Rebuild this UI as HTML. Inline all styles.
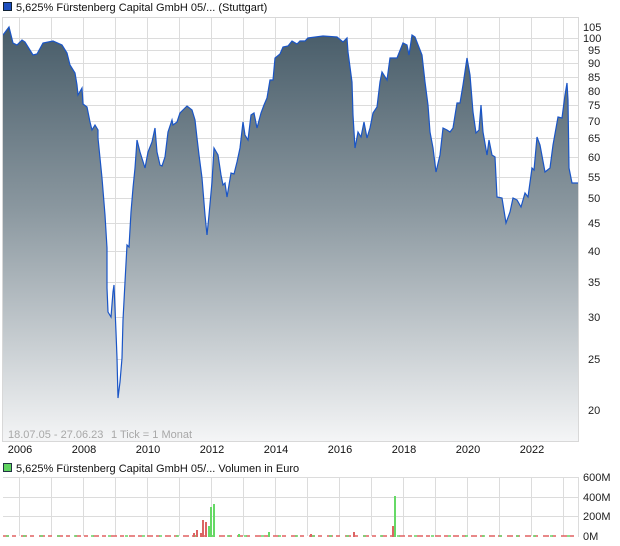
<!DOCTYPE html>
<html><head><meta charset="utf-8"><style>
html,body{margin:0;padding:0;background:#fff;}
svg{display:block;font-family:"Liberation Sans",sans-serif;}
</style></head><body>
<svg width="620" height="546" viewBox="0 0 620 546" xmlns="http://www.w3.org/2000/svg">
<defs>
<linearGradient id="g" x1="0" y1="17" x2="0" y2="441" gradientUnits="userSpaceOnUse">
<stop offset="0" stop-color="#435865"/>
<stop offset="0.45" stop-color="#8a979f"/>
<stop offset="1" stop-color="#f4f5f6"/>
</linearGradient>
</defs>
<rect x="3.5" y="2.5" width="8" height="8" fill="#1d4fbf" stroke="#123" stroke-width="1"/>
<text x="16" y="11" font-size="11" fill="#111">5,625% Fürstenberg Capital GmbH 05/... (Stuttgart)</text>
<g stroke="#dcdcdc" stroke-width="1">
<line x1="3" y1="17.5" x2="578" y2="17.5"/>
<line x1="3" y1="38.5" x2="578" y2="38.5"/>
<line x1="3" y1="50.5" x2="578" y2="50.5"/>
<line x1="3" y1="63.5" x2="578" y2="63.5"/>
<line x1="3" y1="77.5" x2="578" y2="77.5"/>
<line x1="3" y1="91.5" x2="578" y2="91.5"/>
<line x1="3" y1="105.5" x2="578" y2="105.5"/>
<line x1="3" y1="121.5" x2="578" y2="121.5"/>
<line x1="3" y1="138.5" x2="578" y2="138.5"/>
<line x1="3" y1="157.5" x2="578" y2="157.5"/>
<line x1="3" y1="177.5" x2="578" y2="177.5"/>
<line x1="3" y1="198.5" x2="578" y2="198.5"/>
<line x1="3" y1="223.5" x2="578" y2="223.5"/>
<line x1="3" y1="251.5" x2="578" y2="251.5"/>
<line x1="3" y1="282.5" x2="578" y2="282.5"/>
<line x1="3" y1="317.5" x2="578" y2="317.5"/>
<line x1="3" y1="359.5" x2="578" y2="359.5"/>
<line x1="3" y1="410.5" x2="578" y2="410.5"/>
<line x1="19.5" y1="17" x2="19.5" y2="441"/><line x1="51.5" y1="17" x2="51.5" y2="441"/><line x1="83.5" y1="17" x2="83.5" y2="441"/><line x1="115.5" y1="17" x2="115.5" y2="441"/><line x1="147.5" y1="17" x2="147.5" y2="441"/><line x1="179.5" y1="17" x2="179.5" y2="441"/><line x1="211.5" y1="17" x2="211.5" y2="441"/><line x1="243.5" y1="17" x2="243.5" y2="441"/><line x1="275.5" y1="17" x2="275.5" y2="441"/><line x1="307.5" y1="17" x2="307.5" y2="441"/><line x1="339.5" y1="17" x2="339.5" y2="441"/><line x1="371.5" y1="17" x2="371.5" y2="441"/><line x1="403.5" y1="17" x2="403.5" y2="441"/><line x1="435.5" y1="17" x2="435.5" y2="441"/><line x1="467.5" y1="17" x2="467.5" y2="441"/><line x1="499.5" y1="17" x2="499.5" y2="441"/><line x1="531.5" y1="17" x2="531.5" y2="441"/><line x1="563.5" y1="17" x2="563.5" y2="441"/>
</g>
<path fill="url(#g)" d="M3,35 L9,27 L13,43 L17,45 L22,40 L25,42 L33,55 L37,54 L43,43 L53,41 L62,45 L67,53 L70,65 L75,73 L77,85 L78,95 L82,88 L83,104 L87,107 L90,122 L92,130 L95,125 L98,130 L98,138 L100,158 L102,178 L105,215 L107,248 L107,288 L108,312 L111,317 L113,292 L114,285 L115,308 L116,332 L117,358 L118,398 L120,382 L122,358 L123,320 L125,282 L127,245 L129,247 L131,212 L133,188 L135,168 L137,140 L140,152 L145,168 L148,152 L152,142 L155,128 L157,152 L160,165 L162,166 L165,157 L168,132 L172,120 L173,125 L177,122 L180,113 L187,106 L192,110 L195,120 L197,138 L199,155 L202,178 L205,215 L207,235 L209,215 L212,182 L214,148 L218,155 L221,175 L223,185 L225,183 L227,197 L231,173 L234,174 L237,162 L240,148 L243,122 L245,135 L248,140 L251,115 L254,113 L257,128 L261,113 L264,105 L267,98 L270,80 L273,80 L275,58 L280,54 L283,47 L288,46 L292,41 L297,44 L300,41 L305,41 L308,38 L323,36 L337,37 L343,42 L347,38 L348,52 L352,82 L353,115 L355,148 L358,132 L361,137 L364,122 L367,138 L370,128 L373,113 L377,107 L380,82 L382,72 L387,80 L390,58 L397,58 L403,43 L407,45 L409,55 L412,35 L415,37 L422,55 L425,82 L428,105 L430,132 L433,148 L436,172 L440,155 L443,128 L447,130 L450,132 L453,128 L457,103 L460,103 L463,85 L467,58 L470,75 L473,112 L476,133 L479,130 L481,105 L483,132 L487,155 L489,140 L492,155 L495,157 L497,197 L502,198 L506,223 L510,212 L513,198 L517,200 L521,207 L525,193 L528,197 L532,168 L534,170 L537,137 L540,145 L545,172 L550,168 L553,145 L558,117 L562,118 L565,95 L567,83 L568,100 L569,168 L572,183 L578,183 L578,441 L3,441 Z"/>
<path fill="none" stroke="#1a55c6" stroke-width="1.2" d="M3,35 L9,27 L13,43 L17,45 L22,40 L25,42 L33,55 L37,54 L43,43 L53,41 L62,45 L67,53 L70,65 L75,73 L77,85 L78,95 L82,88 L83,104 L87,107 L90,122 L92,130 L95,125 L98,130 L98,138 L100,158 L102,178 L105,215 L107,248 L107,288 L108,312 L111,317 L113,292 L114,285 L115,308 L116,332 L117,358 L118,398 L120,382 L122,358 L123,320 L125,282 L127,245 L129,247 L131,212 L133,188 L135,168 L137,140 L140,152 L145,168 L148,152 L152,142 L155,128 L157,152 L160,165 L162,166 L165,157 L168,132 L172,120 L173,125 L177,122 L180,113 L187,106 L192,110 L195,120 L197,138 L199,155 L202,178 L205,215 L207,235 L209,215 L212,182 L214,148 L218,155 L221,175 L223,185 L225,183 L227,197 L231,173 L234,174 L237,162 L240,148 L243,122 L245,135 L248,140 L251,115 L254,113 L257,128 L261,113 L264,105 L267,98 L270,80 L273,80 L275,58 L280,54 L283,47 L288,46 L292,41 L297,44 L300,41 L305,41 L308,38 L323,36 L337,37 L343,42 L347,38 L348,52 L352,82 L353,115 L355,148 L358,132 L361,137 L364,122 L367,138 L370,128 L373,113 L377,107 L380,82 L382,72 L387,80 L390,58 L397,58 L403,43 L407,45 L409,55 L412,35 L415,37 L422,55 L425,82 L428,105 L430,132 L433,148 L436,172 L440,155 L443,128 L447,130 L450,132 L453,128 L457,103 L460,103 L463,85 L467,58 L470,75 L473,112 L476,133 L479,130 L481,105 L483,132 L487,155 L489,140 L492,155 L495,157 L497,197 L502,198 L506,223 L510,212 L513,198 L517,200 L521,207 L525,193 L528,197 L532,168 L534,170 L537,137 L540,145 L545,172 L550,168 L553,145 L558,117 L562,118 L565,95 L567,83 L568,100 L569,168 L572,183 L578,183"/>
<rect x="2.5" y="17.5" width="576" height="424" fill="none" stroke="#d8d8d8"/>
<text x="8" y="438" font-size="11" fill="#a8a8a8">18.07.05 - 27.06.23</text>
<text x="111" y="438" font-size="11" fill="#a8a8a8">1 Tick = 1 Monat</text>
<g font-size="11" fill="#222">
<text x="583" y="31">105</text><text x="583" y="42">100</text><text x="588" y="54">95</text><text x="588" y="67">90</text><text x="588" y="81">85</text><text x="588" y="95">80</text><text x="588" y="109">75</text><text x="588" y="125">70</text><text x="588" y="142">65</text><text x="588" y="161">60</text><text x="588" y="181">55</text><text x="588" y="202">50</text><text x="588" y="227">45</text><text x="588" y="255">40</text><text x="588" y="286">35</text><text x="588" y="321">30</text><text x="588" y="363">25</text><text x="588" y="414">20</text>
</g>
<g font-size="11" fill="#111" text-anchor="middle">
<text x="20" y="453">2006</text><text x="84" y="453">2008</text><text x="148" y="453">2010</text><text x="212" y="453">2012</text><text x="276" y="453">2014</text><text x="340" y="453">2016</text><text x="404" y="453">2018</text><text x="468" y="453">2020</text><text x="532" y="453">2022</text>
</g>
<rect x="3.5" y="463.5" width="8" height="8" fill="#5fd35f" stroke="#234" stroke-width="1"/>
<text x="16" y="472" font-size="11" fill="#111">5,625% Fürstenberg Capital GmbH 05/... Volumen in Euro</text>
<g stroke="#dcdcdc" stroke-width="1">
<line x1="3" y1="477.5" x2="578" y2="477.5"/><line x1="3" y1="497.5" x2="578" y2="497.5"/><line x1="3" y1="516.5" x2="578" y2="516.5"/>
<line x1="19.5" y1="477" x2="19.5" y2="536"/><line x1="51.5" y1="477" x2="51.5" y2="536"/><line x1="83.5" y1="477" x2="83.5" y2="536"/><line x1="115.5" y1="477" x2="115.5" y2="536"/><line x1="147.5" y1="477" x2="147.5" y2="536"/><line x1="179.5" y1="477" x2="179.5" y2="536"/><line x1="211.5" y1="477" x2="211.5" y2="536"/><line x1="243.5" y1="477" x2="243.5" y2="536"/><line x1="275.5" y1="477" x2="275.5" y2="536"/><line x1="307.5" y1="477" x2="307.5" y2="536"/><line x1="339.5" y1="477" x2="339.5" y2="536"/><line x1="371.5" y1="477" x2="371.5" y2="536"/><line x1="403.5" y1="477" x2="403.5" y2="536"/><line x1="435.5" y1="477" x2="435.5" y2="536"/><line x1="467.5" y1="477" x2="467.5" y2="536"/><line x1="499.5" y1="477" x2="499.5" y2="536"/><line x1="531.5" y1="477" x2="531.5" y2="536"/><line x1="563.5" y1="477" x2="563.5" y2="536"/>
<line x1="578.5" y1="477" x2="578.5" y2="537"/>
</g>
<line x1="3" y1="536" x2="578" y2="536" stroke="#e06060" stroke-width="1.5" stroke-dasharray="6 3 4 5"/>
<line x1="6" y1="536" x2="578" y2="536" stroke="#66d466" stroke-width="1.5" stroke-dasharray="3 14"/>
<g fill="#dc6464">
<rect x="193" y="533" width="2" height="4"/><rect x="196" y="530" width="2" height="7"/><rect x="200" y="533" width="2" height="4"/><rect x="202" y="520" width="2" height="17"/><rect x="205" y="522" width="2" height="15"/><rect x="353" y="532" width="2" height="5"/><rect x="392" y="526" width="2" height="11"/><rect x="310" y="534" width="2" height="3"/>
</g>
<g fill="#66d966">
<rect x="208" y="526" width="2" height="11"/><rect x="210" y="507" width="2" height="30"/><rect x="213" y="504" width="2" height="33"/><rect x="268" y="532" width="2" height="5"/><rect x="394" y="496" width="2" height="41"/><rect x="238" y="534" width="2" height="3"/>
</g>
<g font-size="11" fill="#222">
<text x="583" y="481">600M</text><text x="583" y="501">400M</text><text x="583" y="520">200M</text><text x="583" y="540">0M</text>
</g>
</svg>
</body></html>
